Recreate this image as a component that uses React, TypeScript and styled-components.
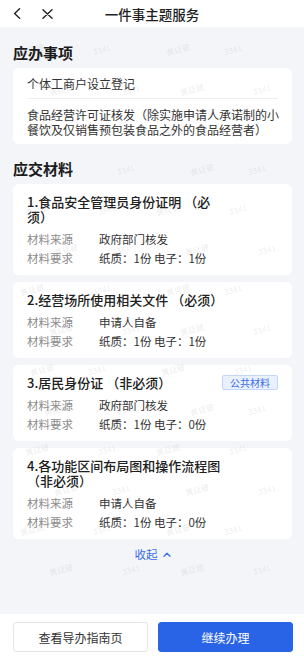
import React from 'react';
import styled, { createGlobalStyle } from 'styled-components';

const Global = createGlobalStyle`
  html, body { margin: 0; padding: 0; }
  body {
    font-family: "Noto Sans CJK SC", "Noto Sans", sans-serif;
    background: #f4f5f9;
  }
  * { box-sizing: border-box; }
`;

const Page = styled.div`
  position: relative;
  width: 304px;
  height: 659px;
  display: flex;
  flex-direction: column;
  overflow: hidden;
  background: #f4f5f9;
`;

const Header = styled.header`
  flex: none;
  height: 27px;
  background: #fff;
  display: grid;
  grid-template-columns: 1fr auto 1fr;
  align-items: center;
  padding: 0 13px;
`;

const HeaderIcons = styled.div`
  display: flex;
  align-items: center;
  gap: 21px;
`;

const HeaderTitle = styled.h1`
  margin: 0;
  font-size: 13.5px;
  font-weight: 500;
  color: #1f1f1f;
  line-height: 18px;
`;

const Content = styled.main`
  flex: 1;
  overflow: hidden;
  padding: 16px 12px 0 13px;
`;

const SectionTitle = styled.h2<{ $top: number }>`
  margin: ${p => p.$top}px 0 5px;
  font-size: 15px;
  line-height: 20px;
  font-weight: 700;
  color: #1b1b1b;
`;

const Card = styled.section`
  background: #fff;
  border-radius: 6px;
`;

const Item = styled.div`
  padding: 7.5px 11px 7.5px 14px;
  font-size: 12px;
  line-height: 15px;
  color: #333;
`;

const Divider = styled.div`
  height: 1px;
  margin: 0 14px;
  background: #eeeeee;
`;

const MatList = styled.div`
  display: flex;
  flex-direction: column;
  gap: 7px;
`;

const MatCard = styled(Card)`
  padding: 10px 14px 7px;
`;

const TitleRow = styled.div`
  display: flex;
  justify-content: space-between;
  align-items: center;
`;

const MatTitle = styled.div`
  max-width: 200px;
  font-size: 13px;
  line-height: 15px;
  font-weight: 500;
  color: #202020;
`;

const Badge = styled.span`
  flex: none;
  height: 15px;
  padding: 0 7px;
  border: 1px solid #c3d5f8;
  background: #eaf1fe;
  color: #3a6ee8;
  border-radius: 2px;
  font-size: 10px;
  line-height: 13px;
`;

const Rows = styled.div`
  margin-top: 6px;
`;

const Row = styled.div`
  display: grid;
  grid-template-columns: 72px 1fr;
  font-size: 11.5px;
  line-height: 19px;
`;

const Label = styled.span`
  color: #8c8c8c;
`;

const Value = styled.span`
  color: #333;
`;

const Collapse = styled.div`
  margin-top: 7px;
  display: flex;
  justify-content: center;
  align-items: center;
  gap: 5px;
  color: #3a6ee8;
  font-size: 11.5px;
  line-height: 16px;
`;

const Footer = styled.footer`
  flex: none;
  height: 45px;
  background: #fff;
  display: flex;
  gap: 10px;
  padding: 8px 11px 7px 13px;
`;

const Button = styled.button<{ $primary?: boolean }>`
  flex: 1;
  height: 30px;
  border-radius: 3px;
  font-family: inherit;
  font-size: 12px;
  border: 1px solid ${p => (p.$primary ? '#2a64e6' : '#e4e4e4')};
  background: ${p => (p.$primary ? '#2a64e6' : '#fff')};
  color: ${p => (p.$primary ? '#fff' : '#333')};
  padding: 0;
`;

const Watermarks = styled.div`
  position: absolute;
  top: 30px;
  height: 580px;
  left: 16px;
  right: 16px;
  pointer-events: none;
  display: grid;
  grid-template-columns: repeat(4, 1fr);
  grid-template-rows: repeat(14, 40px);
`;

const Mark = styled.div<{ $shift: number }>`
  display: flex;
  align-items: center;
  padding-left: ${p => p.$shift}px;
  font-size: 8px;
  line-height: 10px;
  color: rgba(120, 120, 130, 0.15);
  white-space: nowrap;
  span { display: inline-block; transform: rotate(-15deg); }
`;

const BackIcon = () => (
  <svg width="8" height="11" viewBox="0 0 8 11" fill="none">
    <path d="M6.6 0.8 L1.6 5.5 L6.6 10.2" stroke="#222" strokeWidth="1.4" strokeLinecap="round" strokeLinejoin="round" />
  </svg>
);

const CloseIcon = () => (
  <svg width="11" height="10" viewBox="0 0 11 10" fill="none">
    <path d="M1 0.7 L10 9.3 M10 0.7 L1 9.3" stroke="#222" strokeWidth="1.4" strokeLinecap="round" />
  </svg>
);

const UpIcon = () => (
  <svg width="8" height="5" viewBox="0 0 8 5" fill="none">
    <path d="M1 4.2 L4 1.2 L7 4.2" stroke="#3a6ee8" strokeWidth="1.3" strokeLinecap="round" strokeLinejoin="round" />
  </svg>
);

type Material = {
  title: string;
  source: string;
  paper: number;
  digital: number;
  badge?: string;
};

const materials: Material[] = [
  { title: '1.食品安全管理员身份证明 （必须）', source: '政府部门核发', paper: 1, digital: 1 },
  { title: '2.经营场所使用相关文件 （必须）', source: '申请人自备', paper: 1, digital: 1 },
  { title: '3.居民身份证 （非必须）', source: '政府部门核发', paper: 1, digital: 0, badge: '公共材料' },
  { title: '4.各功能区间布局图和操作流程图 （非必须）', source: '申请人自备', paper: 1, digital: 0 },
];

const marks = Array.from({ length: 56 }, (_, i) => ({
  text: i % 2 === 0 ? '黄廷键' : '3341',
  shift: (Math.floor(i / 4) % 2) * 24 + (i % 3) * 5 + 4,
}));

export default function App() {
  return (
    <>
      <Global />
      <Page>
        <Header>
          <HeaderIcons>
            <BackIcon />
            <CloseIcon />
          </HeaderIcons>
          <HeaderTitle>一件事主题服务</HeaderTitle>
          <div />
        </Header>
        <Content>
          <SectionTitle $top={0}>应办事项</SectionTitle>
          <Card>
            <Item>个体工商户设立登记</Item>
            <Divider />
            <Item>食品经营许可证核发（除实施申请人承诺制的小餐饮及仅销售预包装食品之外的食品经营者）</Item>
          </Card>
          <SectionTitle $top={15}>应交材料</SectionTitle>
          <MatList>
            {materials.map(m => (
              <MatCard key={m.title}>
                <TitleRow>
                  <MatTitle>{m.title}</MatTitle>
                  {m.badge && <Badge>{m.badge}</Badge>}
                </TitleRow>
                <Rows>
                  <Row>
                    <Label>材料来源</Label>
                    <Value>{m.source}</Value>
                  </Row>
                  <Row>
                    <Label>材料要求</Label>
                    <Value>纸质：{m.paper}份 电子：{m.digital}份</Value>
                  </Row>
                </Rows>
              </MatCard>
            ))}
          </MatList>
          <Collapse>
            <span>收起</span>
            <UpIcon />
          </Collapse>
        </Content>
        <Footer>
          <Button>查看导办指南页</Button>
          <Button $primary>继续办理</Button>
        </Footer>
        <Watermarks>
          {marks.map((m, i) => (
            <Mark key={i} $shift={m.shift}><span>{m.text}</span></Mark>
          ))}
        </Watermarks>
      </Page>
    </>
  );
}
